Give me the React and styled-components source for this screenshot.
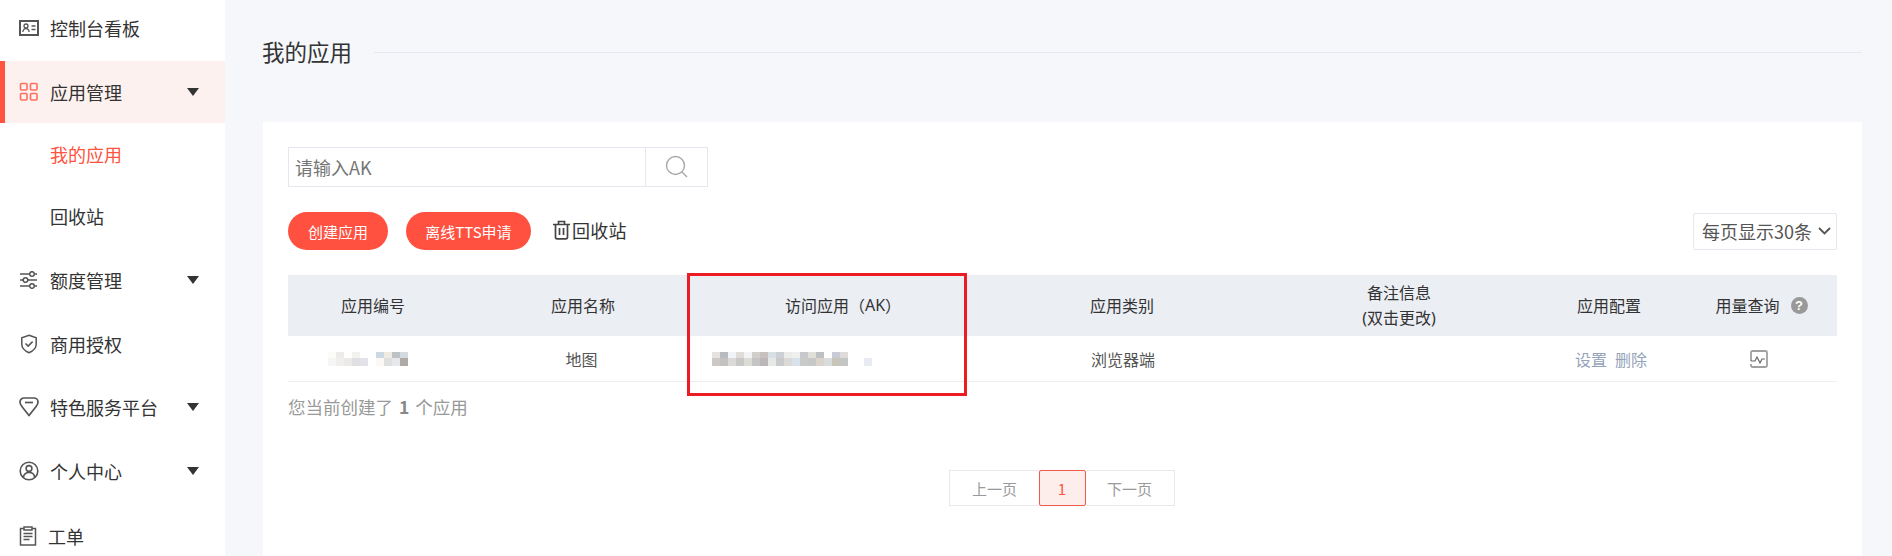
import React from "react";
import styled, { createGlobalStyle } from "styled-components";

const GlobalStyle = createGlobalStyle`
  html, body {
    margin: 0;
    padding: 0;
    height: 100%;
    overflow: hidden;
    background: #f5f7fb;
  }
  * {
    box-sizing: border-box;
  }
  body {
    font-family: "Noto Sans CJK SC", "Noto Sans", sans-serif;
    color: #333;
  }
`;

const Page = styled.div`
  display: flex;
  width: 1892px;
  height: 556px;
  overflow: hidden;
`;

const Sidebar = styled.nav`
  width: 225px;
  flex-shrink: 0;
  background: #fff;
  overflow: hidden;
`;

const NavList = styled.div`
  margin-top: -3px;
`;

const NavItem = styled.div`
  display: flex;
  align-items: center;
  height: 62px;
  margin-bottom: ${(props) => (props.$active ? 0 : props.$gap ?? 2)}px;
  padding-left: ${(props) => (props.$active ? "14px" : "19px")};
  border-left: ${(props) => (props.$active ? "5px solid #ff5340" : "none")};
  background: ${(props) => (props.$active ? "#fdf1ef" : "#fff")};
  font-size: 18px;
  line-height: 24px;
  color: #333;
  svg {
    flex-shrink: 0;
  }
`;

const NavLabel = styled.span`
  margin-left: 11px;
  flex: 1;
`;

const SubList = styled.div`
  padding-bottom: 2px;
`;

const SubItem = styled.div`
  display: flex;
  align-items: center;
  height: 62px;
  padding-left: 50px;
  font-size: 18px;
  color: ${(props) => (props.$current ? "#ff5340" : "#333")};
`;

const Caret = styled.i`
  width: 0;
  height: 0;
  margin-right: 26px;
  border-left: 6.5px solid transparent;
  border-right: 6.5px solid transparent;
  border-top: 8px solid #333;
`;

const Main = styled.main`
  flex: 1;
  padding: 31px 30px 0 38px;
`;

const TitleRow = styled.div`
  display: flex;
  align-items: center;
  height: 42px;
  margin-bottom: 49px;
`;

const Title = styled.h1`
  margin: -2px 22px 0 -1px;
  font-size: 22.5px;
  font-weight: normal;
  line-height: 42px;
  color: #333;
`;

const TitleLine = styled.div`
  flex: 1;
  height: 1px;
  background: #e5e8ee;
`;

const Card = styled.section`
  background: #fff;
  padding: 25px 25px 0;
  height: 450px;
`;

const SearchBox = styled.div`
  display: flex;
  width: 420px;
  height: 40px;
  border: 1px solid #e4e7ed;
`;

const SearchInput = styled.input`
  flex: 1;
  min-width: 0;
  border: none;
  outline: none;
  padding: 0 6px;
  font-family: inherit;
  font-size: 18px;
  color: #333;
  &::placeholder {
    color: #757575;
  }
`;

const SearchButton = styled.div`
  display: flex;
  align-items: center;
  justify-content: center;
  width: 62px;
  border-left: 1px solid #e4e7ed;
`;

const Toolbar = styled.div`
  display: flex;
  align-items: center;
  margin-top: 25px;
  height: 38px;
`;

const PillButton = styled.button`
  width: ${(props) => props.$width}px;
  height: 38px;
  margin-right: 18px;
  border: none;
  border-radius: 19px;
  padding: 0;
  background: #ff5040;
  color: #fff;
  font-family: inherit;
  font-size: 15px;
`;

const RecycleLink = styled.div`
  display: flex;
  align-items: center;
  gap: 2px;
  margin-left: 4px;
  margin-bottom: 3px;
  font-size: 18px;
  color: #333;
  letter-spacing: 0.3px;
`;

const PageSize = styled.div`
  display: flex;
  align-items: center;
  justify-content: space-between;
  align-self: flex-end;
  width: 144px;
  height: 37px;
  margin-left: auto;
  padding: 0 5px 2px 8px;
  border: 1px solid #e4e7ed;
  border-radius: 2px;
  font-size: 18px;
  line-height: 32px;
  color: #555;
`;

const TableWrap = styled.div`
  position: relative;
  margin-top: 25px;
`;

const Row = styled.div`
  display: grid;
  grid-template-columns: 170px 250px 266px 296px 258px 162px 147px;
  align-items: center;
  text-align: center;
  font-size: 16px;
`;

const HeadRow = styled(Row)`
  height: 61px;
  background: #ebeef3;
  color: #333;
  line-height: 25px;
`;

const BodyRow = styled(Row)`
  height: 46px;
  border-bottom: 1px solid #eeeeee;
  color: #555;
`;

const Cell = styled.div`
  display: flex;
  align-items: center;
  justify-content: ${(props) => props.$justify || "center"};
  padding-left: ${(props) => props.$inset || 0}px;
  padding-right: ${(props) => props.$insetRight || 0}px;
`;

const Latin = styled.span`
  font-family: "Noto Sans", sans-serif;
`;

const ActionLink = styled.a`
  color: #94a3b8;
  margin-right: 8px;
  &:last-child {
    margin-right: 0;
  }
`;

const HelpDot = styled.span`
  display: inline-flex;
  align-items: center;
  justify-content: center;
  width: 17px;
  height: 17px;
  margin-left: 11px;
  border-radius: 50%;
  background: #999;
  color: #fff;
  font-size: 13px;
  font-weight: bold;
  font-family: "Liberation Sans", sans-serif;
`;

const Highlight = styled.div`
  position: absolute;
  left: 399px;
  top: -2px;
  width: 280px;
  height: 123px;
  border: 3px solid #ed1c24;
  pointer-events: none;
`;

const Summary = styled.p`
  margin: 11px 0 0;
  font-size: 17.5px;
  line-height: 28px;
  color: #999;
  b {
    color: #888;
    margin: 0 2px;
  }
`;

const Pager = styled.div`
  display: flex;
  justify-content: center;
  margin-top: 49px;
  padding-right: 2px;
`;

const PageCell = styled.div`
  display: flex;
  align-items: center;
  justify-content: center;
  width: ${(props) => props.$width}px;
  height: 36px;
  margin-left: ${(props) => (props.$active ? "-1px" : "0")};
  border: 1px solid ${(props) => (props.$active ? "#f2594b" : "#e8e8e8")};
  border-left-width: ${(props) => (props.$flat ? "0" : "1px")};
  border-right-width: ${(props) => (props.$flatRight ? "0" : "1px")};
  border-radius: ${(props) => (props.$active ? "2px" : "0")};
  background: ${(props) => (props.$active ? "#fdeeec" : "#fff")};
  color: ${(props) => (props.$active ? "#ff5340" : "#999")};
  font-size: 15px;
`;

const IdCardIcon = () => (
  <svg width="20" height="16" viewBox="0 0 20 16" fill="none" stroke="#555">
    <rect x="1" y="1" width="18" height="14" strokeWidth="2" />
    <circle cx="7" cy="6" r="2" strokeWidth="1.3" />
    <path d="M3.800 12c.3-2.400 1.500-3.400 3.200-3.400s2.900 1 3.200 3.400" strokeWidth="1.300" />
    <path d="M12.500 6h4M12.500 9.500h4" strokeWidth="1.300" />
  </svg>
);

const GridIcon = () => (
  <svg width="20" height="20" viewBox="0 0 20 20" fill="none" stroke="#ff6f5e" strokeWidth="1.600">
    <rect x="1.500" y="1.500" width="6.500" height="6.500" rx="1" />
    <rect x="11.500" y="1.500" width="6.500" height="6.500" rx="1" />
    <rect x="1.500" y="11.500" width="6.500" height="6.500" rx="1" />
    <rect x="11.500" y="11.500" width="6.500" height="6.500" rx="1" />
  </svg>
);

const SlidersIcon = () => (
  <svg width="20" height="18" viewBox="0 0 20 18" fill="none" stroke="#555" strokeWidth="1.500">
    <path d="M1 3h9.500M15.500 3H18M1 9h3M9 9h9M1 15h9.500M15.500 15H18" />
    <circle cx="13" cy="3" r="2.300" />
    <circle cx="6.500" cy="9" r="2.300" />
    <circle cx="13" cy="15" r="2.300" />
  </svg>
);

const ShieldIcon = () => (
  <svg width="20" height="20" viewBox="0 0 20 20" fill="none" stroke="#555" strokeWidth="1.500">
    <path d="M10 1.200l7.200 2.600v6.400c0 4-3.200 6.700-7.200 8.500-4-1.800-7.200-4.500-7.200-8.500V3.800z" />
    <path d="M6.500 9.500l2.600 2.600 4.500-4.500" />
  </svg>
);

const BadgeIcon = () => (
  <svg width="20" height="20" viewBox="0 0 20 20" fill="none" stroke="#555" strokeWidth="1.700">
    <path d="M5.200 1h9.600C17.200 1 19 2.700 19 5c0 1.400-.5 2.600-1.400 3.700-2.100 2.800-4.600 6-7.600 9.800-3-3.800-5.500-7-7.600-9.800C1.500 7.600 1 6.400 1 5c0-2.300 1.800-4 4.200-4z" />
    <path d="M6 5.500h8" />
  </svg>
);

const UserIcon = () => (
  <svg width="20" height="20" viewBox="0 0 20 20" fill="none" stroke="#555" strokeWidth="1.600">
    <circle cx="10" cy="10" r="8.800" />
    <circle cx="10" cy="7.500" r="2.900" />
    <path d="M4.500 16.500c0-3.200 2.300-5 5.500-5s5.500 1.800 5.500 5" />
  </svg>
);

const ClipboardIcon = () => (
  <svg width="18" height="20" viewBox="0 0 18 20" fill="none" stroke="#555" strokeWidth="1.500">
    <path d="M5 2.500H1.500v16.500h15V2.500H13" />
    <rect x="5" y="1" width="8" height="3" />
    <path d="M4.500 7.500h9M4.500 10.500h9M4.500 13.500h6" />
  </svg>
);

const SearchIcon = () => (
  <svg width="24" height="24" viewBox="0 0 24 24" fill="none" stroke="#a8a8a8" strokeWidth="1.400">
    <circle cx="10.500" cy="10.500" r="9" />
    <path d="M17 17l5 5" />
  </svg>
);

const TrashIcon = () => (
  <svg width="17" height="20" viewBox="0 0 17 20" fill="none" stroke="#444" strokeWidth="1.700">
    <path d="M0 4.500h17M5.500 4V1.500h6V4M2.500 4.500V17c0 1 .7 1.800 1.700 1.800h8.600c1 0 1.700-.8 1.700-1.800V4.500" />
    <path d="M6.500 8v7M10.500 8v7" />
  </svg>
);

const Chevron = () => (
  <svg width="13" height="8" viewBox="0 0 13 8" fill="none" stroke="#555" strokeWidth="1.800">
    <path d="M1 1l5.500 5.500L12 1" />
  </svg>
);

const PulseIcon = () => (
  <svg width="18" height="18" viewBox="0 0 18 18" fill="none" stroke="#a0a0a0" strokeWidth="1.800">
    <path d="M1 11V2.500C1 1.700 1.700 1 2.500 1h13c.8 0 1.500.7 1.500 1.500v13c0 .8-.7 1.500-1.500 1.500h-13C1.700 17 1 16.300 1 15.500V14" />
    <path d="M1 11h4l2-4 3 6 2-4h3" stroke="#666" strokeWidth="1.200" />
  </svg>
);

// pixelated blocks that hide the id and the AK in the reference
const idMosaic = [
  ["#fdfbf8", "#eeecea", "#ffffff", "#f2f2ee", null, null, "#ccd8e2", "#f0ebe2", "#bcc2c6", "#d4dce2"],
  ["#f6f6f6", "#f0efee", "#ece9e6", "#e0e0e2", "#e2e2e8", null, "#fdf8f4", "#dde0de", "#e6e8ec", "#b0aaa6"],
];

const akMosaic = [
  ["#e4e3e2", "#b8bcc0", "#f0f4f8", "#e0dcd8", "#f2f3f5", "#d2cecb", "#c8c0bd", "#d8e0e6", "#ccd0d6", "#ececea", "#f0f0ee", "#c6c8cc", "#e2ded8", "#bfc0c2", "#ffffff", "#c8cad6", "#dedcd8"],
  ["#ccc8c4", "#c4c2c0", "#dcdad8", "#cac8c6", "#dcdcd6", "#c4c4c4", "#bcb6b6", "#e6e8e6", "#c8cacc", "#dcdad6", "#d8e2ec", "#c8cac8", "#c6c8c8", "#dcd4cc", "#d8dcdc", "#c8c4b8", "#c4c6c6", null, null, "#e8ecf2"],
];

const Mosaic = ({ rows }) => {
  const cols = Math.max(...rows.map((r) => r.length));
  return (
    <svg width={cols * 8} height={14} viewBox={`0 0 ${cols * 8} 14`} shapeRendering="crispEdges">
      {rows.map((row, y) =>
        row.map((color, x) =>
          color ? (
            <rect key={`${x}-${y}`} x={x * 8} y={y === 0 ? 0 : 6} width={8} height={y === 0 ? 6 : 8} fill={color} />
          ) : null
        )
      )}
    </svg>
  );
};

export default function App() {
  return (
    <>
      <GlobalStyle />
      <Page>
        <Sidebar>
          <NavList>
            <NavItem>
              <IdCardIcon />
              <NavLabel>控制台看板</NavLabel>
            </NavItem>
            <NavItem $active>
              <GridIcon />
              <NavLabel>应用管理</NavLabel>
              <Caret />
            </NavItem>
            <SubList>
              <SubItem $current>我的应用</SubItem>
              <SubItem>回收站</SubItem>
            </SubList>
            <NavItem>
              <SlidersIcon />
              <NavLabel>额度管理</NavLabel>
              <Caret />
            </NavItem>
            <NavItem $gap={1}>
              <ShieldIcon />
              <NavLabel>商用授权</NavLabel>
            </NavItem>
            <NavItem>
              <BadgeIcon />
              <NavLabel>特色服务平台</NavLabel>
              <Caret />
            </NavItem>
            <NavItem $gap={3}>
              <UserIcon />
              <NavLabel>个人中心</NavLabel>
              <Caret />
            </NavItem>
            <NavItem>
              <ClipboardIcon />
              <NavLabel>工单</NavLabel>
            </NavItem>
          </NavList>
        </Sidebar>
        <Main>
          <TitleRow>
            <Title>我的应用</Title>
            <TitleLine />
          </TitleRow>
          <Card>
            <SearchBox>
              <SearchInput placeholder="请输入AK" />
              <SearchButton>
                <SearchIcon />
              </SearchButton>
            </SearchBox>
            <Toolbar>
              <PillButton $width={100}>创建应用</PillButton>
              <PillButton $width={125}>离线TTS申请</PillButton>
              <RecycleLink>
                <TrashIcon />
                回收站
              </RecycleLink>
              <PageSize>
                每页显示30条
                <Chevron />
              </PageSize>
            </Toolbar>
            <TableWrap>
              <HeadRow>
                <Cell>应用编号</Cell>
                <Cell>应用名称</Cell>
                <Cell $inset={4}>
                  访问应用（<Latin>AK</Latin>）
                </Cell>
                <Cell>应用类别</Cell>
                <div>
                  备注信息
                  <br />
                  <Latin>(</Latin>双击更改<Latin>)</Latin>
                </div>
                <Cell>应用配置</Cell>
                <Cell $insetRight={4}>
                  用量查询
                  <HelpDot>?</HelpDot>
                </Cell>
              </HeadRow>
              <BodyRow>
                <Cell $justify="flex-start" $inset={40}>
                  <Mosaic rows={idMosaic} />
                </Cell>
                <Cell $insetRight={3}>地图</Cell>
                <Cell $justify="flex-start" $inset={4}>
                  <Mosaic rows={akMosaic} />
                </Cell>
                <Cell $inset={2}>浏览器端</Cell>
                <Cell />
                <Cell $inset={4}>
                  <ActionLink>设置</ActionLink>
                  <ActionLink>删除</ActionLink>
                </Cell>
                <Cell $insetRight={10}>
                  <PulseIcon />
                </Cell>
              </BodyRow>
              <Highlight />
            </TableWrap>
            <Summary>
              您当前创建了 <b>1</b> 个应用
            </Summary>
            <Pager>
              <PageCell $width={91} $flatRight>上一页</PageCell>
              <PageCell $width={47} $active>1</PageCell>
              <PageCell $width={89} $flat>下一页</PageCell>
            </Pager>
          </Card>
        </Main>
      </Page>
    </>
  );
}
